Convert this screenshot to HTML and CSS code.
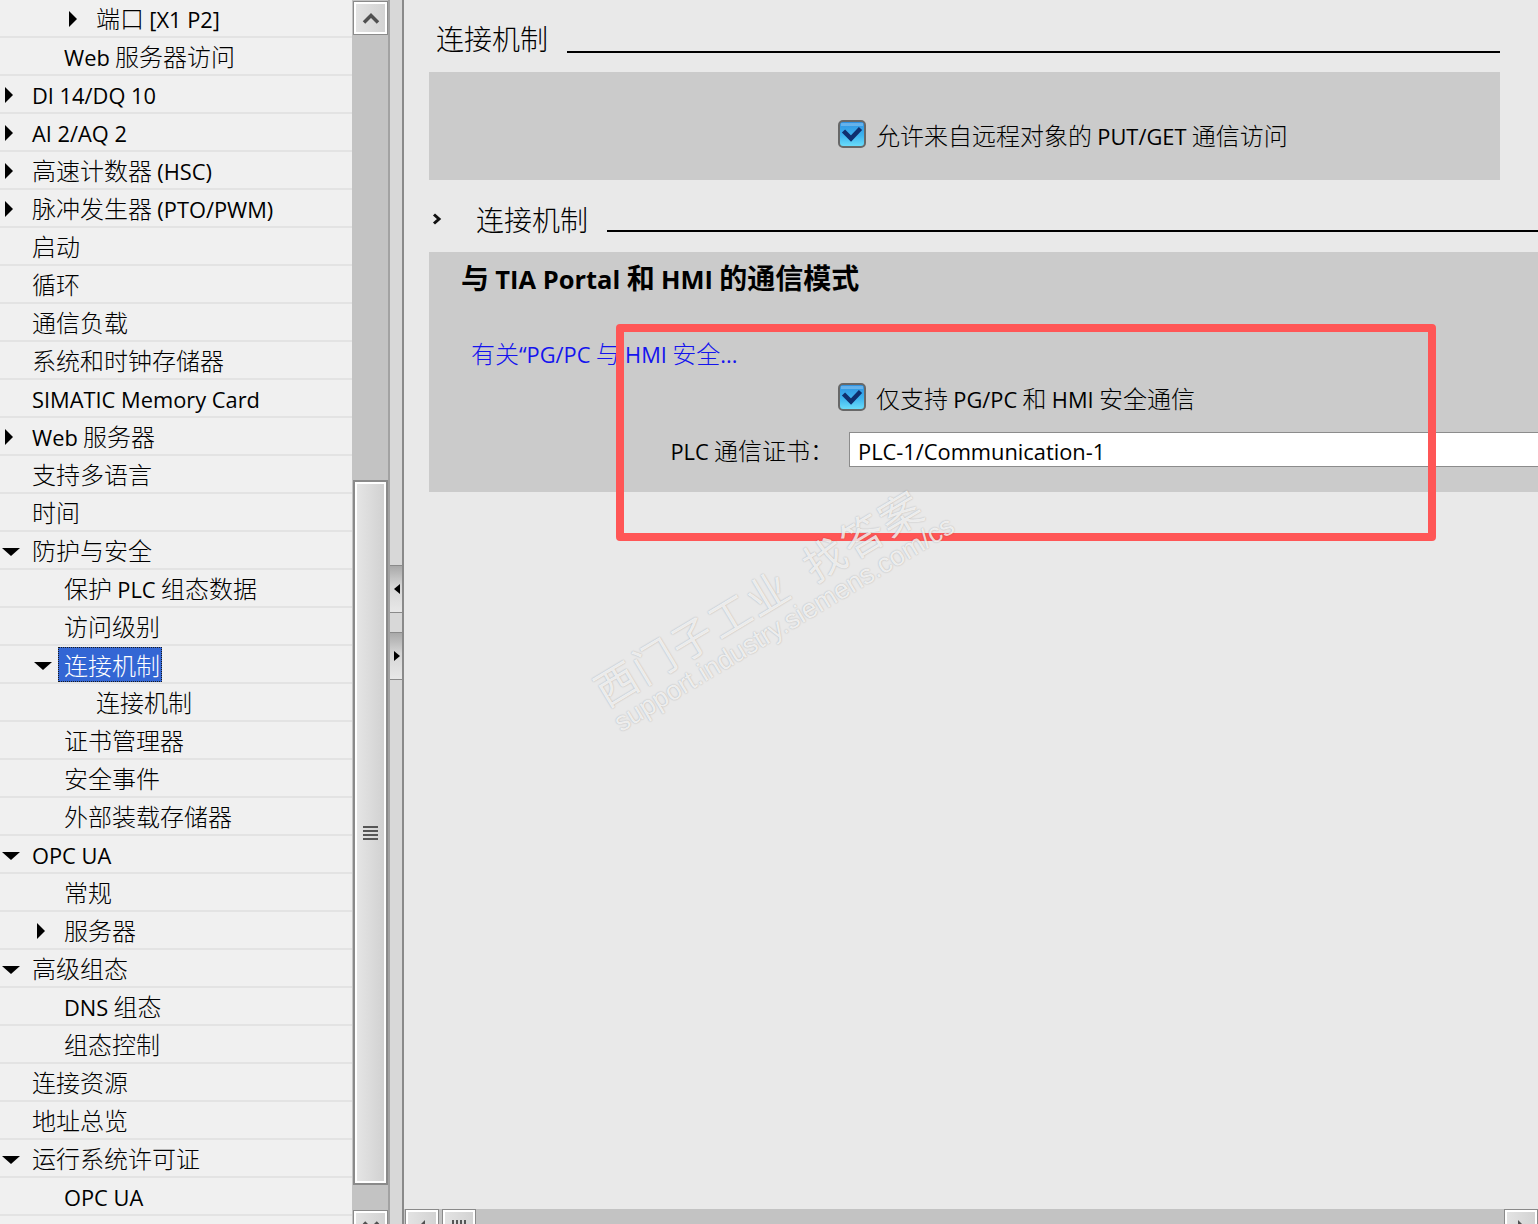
FILE: index.html
```html
<!DOCTYPE html>
<html lang="zh-CN">
<head>
<meta charset="utf-8">
<title>连接机制</title>
<link rel="stylesheet" href="styles.css">
</head>
<body>
<div class="app">
  <div class="tree">
    <div class="row l3"><span class="exp r"></span><span class="txt">端口 <span class="en">[X1 P2]</span></span></div>
    <div class="row l2"><span class="exp"></span><span class="txt"><span class="en">Web</span> 服务器访问</span></div>
    <div class="row l1"><span class="exp r"></span><span class="txt"><span class="en">DI 14/DQ 10</span></span></div>
    <div class="row l1"><span class="exp r"></span><span class="txt"><span class="en">AI 2/AQ 2</span></span></div>
    <div class="row l1"><span class="exp r"></span><span class="txt">高速计数器 <span class="en">(HSC)</span></span></div>
    <div class="row l1"><span class="exp r"></span><span class="txt">脉冲发生器 <span class="en">(PTO/PWM)</span></span></div>
    <div class="row l1"><span class="exp"></span><span class="txt">启动</span></div>
    <div class="row l1"><span class="exp"></span><span class="txt">循环</span></div>
    <div class="row l1"><span class="exp"></span><span class="txt">通信负载</span></div>
    <div class="row l1"><span class="exp"></span><span class="txt">系统和时钟存储器</span></div>
    <div class="row l1"><span class="exp"></span><span class="txt"><span class="en">SIMATIC Memory Card</span></span></div>
    <div class="row l1"><span class="exp r"></span><span class="txt"><span class="en">Web</span> 服务器</span></div>
    <div class="row l1"><span class="exp"></span><span class="txt">支持多语言</span></div>
    <div class="row l1"><span class="exp"></span><span class="txt">时间</span></div>
    <div class="row l1"><span class="exp d"></span><span class="txt">防护与安全</span></div>
    <div class="row l2"><span class="exp"></span><span class="txt">保护 <span class="en">PLC</span> 组态数据</span></div>
    <div class="row l2"><span class="exp"></span><span class="txt">访问级别</span></div>
    <div class="row l2"><span class="exp d"></span><span class="txt sel">连接机制</span></div>
    <div class="row l3"><span class="exp"></span><span class="txt">连接机制</span></div>
    <div class="row l2"><span class="exp"></span><span class="txt">证书管理器</span></div>
    <div class="row l2"><span class="exp"></span><span class="txt">安全事件</span></div>
    <div class="row l2"><span class="exp"></span><span class="txt">外部装载存储器</span></div>
    <div class="row l1"><span class="exp d"></span><span class="txt"><span class="en">OPC UA</span></span></div>
    <div class="row l2"><span class="exp"></span><span class="txt">常规</span></div>
    <div class="row l2"><span class="exp r"></span><span class="txt">服务器</span></div>
    <div class="row l1"><span class="exp d"></span><span class="txt">高级组态</span></div>
    <div class="row l2"><span class="exp"></span><span class="txt"><span class="en">DNS</span> 组态</span></div>
    <div class="row l2"><span class="exp"></span><span class="txt">组态控制</span></div>
    <div class="row l1"><span class="exp"></span><span class="txt">连接资源</span></div>
    <div class="row l1"><span class="exp"></span><span class="txt">地址总览</span></div>
    <div class="row l1"><span class="exp d"></span><span class="txt">运行系统许可证</span></div>
    <div class="row l2"><span class="exp"></span><span class="txt"><span class="en">OPC UA</span></span></div>
    <div class="row l2"><span class="exp"></span><span class="txt"></span></div>
  </div>

  <div class="vscroll">
    <div class="sbtn vbtn">
      <svg width="18" height="12" viewBox="0 0 18 12"><polyline points="2,10.5 9,3.5 16,10.5" fill="none" stroke="#505050" stroke-width="3.5"/></svg>
    </div>
    <div class="vthumb">
      <div class="grip"><i></i><i></i><i></i><i></i></div>
    </div>
    <div class="sbtn vbtn down">
      <svg width="18" height="12" viewBox="0 0 18 12"><polyline points="2,1.5 9,8.5 16,1.5" fill="none" stroke="#505050" stroke-width="3.5"/></svg>
    </div>
  </div>

  <div class="splitter">
    <div class="sp-btn first"><span class="tri-l"></span></div>
    <div class="sp-btn"><span class="tri-r"></span></div>
  </div>

  <div class="main">
    <div class="content">
      <div class="sec-head">
        <span class="sec-title">连接机制</span>
        <span class="sec-rule"></span>
      </div>
      <div class="box box1">
        <div class="chk-row">
          <svg class="chk" width="28" height="28" viewBox="0 0 28 28">
            <defs>
              <linearGradient id="cg1" x1="0" y1="0" x2="0" y2="1">
                <stop offset="0" stop-color="#2f8fe0"/>
                <stop offset="0.55" stop-color="#3db3ee"/>
                <stop offset="1" stop-color="#6ee0fb"/>
              </linearGradient>
            </defs>
            <rect x="1" y="1" width="26" height="26" rx="4" fill="url(#cg1)" stroke="#686868" stroke-width="2"/>
            <rect x="3" y="3" width="22" height="3" fill="#ffffff" opacity="0.25"/>
            <polyline points="5.5,11 13,18.5 22.5,8.5" fill="none" stroke="#0f2f6e" stroke-width="4.5"/>
          </svg>
          <span>允许来自远程对象的 <span class="en">PUT/GET</span> 通信访问</span>
        </div>
      </div>

      <div class="sec-head sec2">
        <svg class="chev" width="10" height="14" viewBox="0 0 10 14"><polyline points="2,2.5 7,7 2,11.5" fill="none" stroke="#111" stroke-width="3"/></svg>
        <span class="sec-title">连接机制</span>
        <span class="sec-rule"></span>
      </div>
      <div class="box box2">
        <div class="box-head">与 <span class="en">TIA Portal</span> 和 <span class="en">HMI</span> 的通信模式</div>
        <div class="link">有关<span class="en">“PG/PC</span> 与 <span class="en">HMI</span> 安全<span class="en">...</span></div>
        <div class="chk-row">
          <svg class="chk" width="28" height="28" viewBox="0 0 28 28">
            <defs>
              <linearGradient id="cg2" x1="0" y1="0" x2="0" y2="1">
                <stop offset="0" stop-color="#2f8fe0"/>
                <stop offset="0.55" stop-color="#3db3ee"/>
                <stop offset="1" stop-color="#6ee0fb"/>
              </linearGradient>
            </defs>
            <rect x="1" y="1" width="26" height="26" rx="4" fill="url(#cg2)" stroke="#686868" stroke-width="2"/>
            <rect x="3" y="3" width="22" height="3" fill="#ffffff" opacity="0.25"/>
            <polyline points="5.5,11 13,18.5 22.5,8.5" fill="none" stroke="#0f2f6e" stroke-width="4.5"/>
          </svg>
          <span>仅支持 <span class="en">PG/PC</span> 和 <span class="en">HMI</span> 安全通信</span>
        </div>
        <div class="field-row">
          <span class="field-label"><span class="en">PLC</span> 通信证书：</span>
          <span class="field"><span class="en">PLC-1/Communication-1</span></span>
        </div>
      </div>
    </div>

    <div class="hscroll">
      <div class="sbtn hbtn"><span class="tri-hl"></span></div>
      <div class="sbtn hthumb"><span class="hgrip"></span></div>
      <div class="htrack"></div>
      <div class="sbtn hbtn"><span class="tri-hr"></span></div>
    </div>

    <div class="annot"></div>
    <div class="watermark">
      <div class="wm1">西门子工业&nbsp;&nbsp;找答案</div>
      <div class="wm2">support.industry.siemens.com/cs</div>
    </div>
  </div>
</div>
</body>
</html>
```
FILE: styles.css
```css
html, body {
  margin: 0;
  padding: 0;
}
body {
  width: 1538px;
  height: 1224px;
  overflow: hidden;
  background: #e9e9e9;
  font-family: "Noto Sans CJK SC", sans-serif;
  font-weight: 300;
  color: #000;
}
.en {
  font-family: "Open Sans", "Noto Sans CJK SC", sans-serif;
  font-size: 0.91em;
  font-weight: 400;
  line-height: 1;
}
.app {
  display: flex;
  height: 1244px;
}

/* ---------- tree ---------- */
.tree {
  width: 352px;
  flex: none;
  background: #f0f0f0;
  overflow: hidden;
}
.row {
  display: flex;
  align-items: flex-start;
  height: 36px;
  border-bottom: 2px solid #e3e3e3;
  font-size: 24px;
  line-height: 36px;
  white-space: nowrap;
}
.row.l2 { padding-left: 32px; }
.row.l3 { padding-left: 64px; }
.exp {
  width: 32px;
  height: 36px;
  flex: none;
}
.exp.r::before {
  content: "";
  display: block;
  width: 0;
  height: 0;
  margin: 11px 0 0 5px;
  border-left: 8px solid #000;
  border-top: 8.5px solid transparent;
  border-bottom: 8.5px solid transparent;
}
.exp.d::before {
  content: "";
  display: block;
  width: 0;
  height: 0;
  margin: 16px 0 0 2px;
  border-top: 8px solid #000;
  border-left: 9px solid transparent;
  border-right: 9px solid transparent;
}
.txt.sel {
  margin: 1px 0 0 -6px;
  padding: 0 1px 0 5px;
  height: 33px;
  line-height: 33px;
  background: #3366d4;
  color: #fff;
  border: 1px dotted #1b1b1b;
}

/* ---------- vertical scrollbar ---------- */
.vscroll {
  width: 36px;
  flex: none;
  background: #c3c3c3;
  display: flex;
  flex-direction: column;
  align-items: flex-end;
}
.sbtn {
  box-sizing: border-box;
  border: 1px solid #8a8a8a;
  box-shadow: inset 0 0 0 2px #fff;
  background: linear-gradient(to right, #e4e4e4, #d2d2d2);
  display: flex;
  align-items: center;
  justify-content: center;
}
.vbtn {
  width: 35px;
  height: 34px;
  margin-top: 1px;
}
.vbtn.down {
  margin-top: 25px;
}
.vthumb {
  box-sizing: border-box;
  width: 35px;
  height: 705px;
  margin-top: 445px;
  border: 2px solid #8a8a8a;
  box-shadow: inset 0 0 0 2px #fff;
  background: linear-gradient(to right, #e6e6e6, #d0d0d0);
  display: flex;
  align-items: center;
  justify-content: center;
}
.grip {
  display: flex;
  flex-direction: column;
  gap: 2px;
}
.grip i {
  display: block;
  width: 15px;
  height: 2px;
  background: #565656;
}

/* ---------- splitter ---------- */
.splitter {
  width: 12px;
  flex: none;
  background: #d8d8d8;
  border-left: 2px solid #a2a2a2;
  border-right: 2px solid #8a8a8a;
  display: flex;
  flex-direction: column;
}
.sp-btn {
  height: 46px;
  border-top: 1px solid #8a8a8a;
  border-bottom: 1px solid #8a8a8a;
  background: linear-gradient(to bottom, #a9a9a9, #d6d6d6 45%, #e8e8e8);
  display: flex;
  align-items: center;
  justify-content: center;
  margin-top: 19px;
}
.sp-btn.first {
  margin-top: 565px;
}
.tri-l {
  width: 0; height: 0;
  border-right: 6px solid #000;
  border-top: 5px solid transparent;
  border-bottom: 5px solid transparent;
  margin-left: 2px;
}
.tri-r {
  width: 0; height: 0;
  border-left: 6px solid #000;
  border-top: 5px solid transparent;
  border-bottom: 5px solid transparent;
  margin-left: 2px;
}

/* ---------- main ---------- */
.main {
  flex: 1;
  position: relative;
  background: #e9e9e9;
  display: flex;
  flex-direction: column;
  overflow: hidden;
}
.content {
  height: 1209px;
  flex: none;
  font-size: 24px;
}
.sec-head {
  display: flex;
  align-items: flex-end;
  height: 38px;
  margin: 19px 38px 0 32px;
}
.sec-title {
  font-size: 28px;
  line-height: 38px;
  white-space: nowrap;
}
.sec-rule {
  flex: 1;
  height: 2px;
  background: #000;
  margin: 0 0 4px 19px;
}
.sec2 {
  margin: 20px 0 0 28px;
}
.sec2 .chev {
  flex: none;
  margin: 0 34px 12px 0;
}
.sec2 .sec-rule {
  margin-bottom: 6px;
}
.box {
  background: #cbcbcb;
  margin-top: 15px;
  margin-left: 25px;
}
.box1 {
  height: 108px;
  box-sizing: border-box;
  margin-right: 38px;
  padding-top: 48px;
}
.box2 {
  height: 240px;
  box-sizing: border-box;
  padding-top: 6px;
}
.sec2 + .box2 {
  margin-top: 14px;
}
.chk-row {
  display: flex;
  align-items: center;
  height: 28px;
  padding-left: 409px;
  white-space: nowrap;
}
.chk {
  flex: none;
  margin-right: 10px;
}
.box-head {
  font-size: 28px;
  font-weight: 700;
  height: 38px;
  line-height: 38px;
  padding-left: 32px;
}
.box-head .en {
  font-weight: 700;
}
.link {
  color: #1414ee;
  height: 36px;
  line-height: 36px;
  margin-top: 39px;
  padding-left: 42px;
}
.box2 .chk-row {
  margin-top: 12px;
}
.field-row {
  display: flex;
  margin-top: 21px;
  height: 35px;
}
.field-label {
  width: 405px;
  flex: none;
  text-align: right;
  line-height: 35px;
}
.field {
  flex: 1;
  margin-left: 15px;
  box-sizing: border-box;
  height: 35px;
  line-height: 33px;
  padding-left: 8px;
  background: #fff;
  border: 1px solid #8c8c8c;
  border-right: none;
  white-space: nowrap;
}

/* ---------- horizontal scrollbar ---------- */
.hscroll {
  height: 34px;
  flex: none;
  background: #c3c3c3;
  display: flex;
  padding-left: 1px;
}
.hbtn {
  width: 34px;
  height: 34px;
}
.hthumb {
  width: 34px;
  height: 34px;
  margin-left: 3px;
}
.htrack {
  flex: 1;
}
.tri-hl {
  width: 0; height: 0;
  border-right: 6px solid #505050;
  border-top: 6px solid transparent;
  border-bottom: 6px solid transparent;
}
.tri-hr {
  width: 0; height: 0;
  border-left: 6px solid #505050;
  border-top: 6px solid transparent;
  border-bottom: 6px solid transparent;
}
.hgrip {
  width: 14px;
  height: 12px;
  background: repeating-linear-gradient(to right, #565656 0 2px, transparent 2px 4px);
}

/* ---------- overlays ---------- */
.annot {
  position: absolute;
  left: 212px;
  top: 324px;
  width: 820px;
  height: 217px;
  box-sizing: border-box;
  border: 8px solid #ff5656;
  border-radius: 4px;
}
.watermark {
  position: absolute;
  left: 182px;
  top: 674px;
  transform-origin: 0 0;
  transform: rotate(-31deg);
  white-space: nowrap;
  color: rgba(255, 255, 255, 0.8);
  text-shadow: 0 0 1.5px rgba(0, 0, 0, 0.3);
  pointer-events: none;
}
.wm1 {
  font-family: "Noto Sans CJK SC", sans-serif;
  font-weight: 400;
  font-size: 42px;
  line-height: 44px;
  letter-spacing: 2px;
}
.wm2 {
  font-family: "Liberation Sans", sans-serif;
  font-weight: 400;
  font-size: 27px;
  line-height: 30px;
}
```
